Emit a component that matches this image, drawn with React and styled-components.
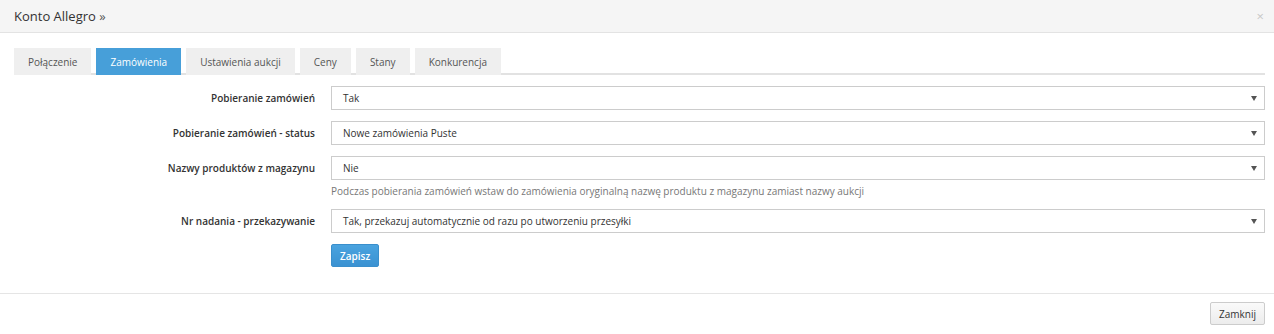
import React from 'react';
import styled, { createGlobalStyle } from 'styled-components';

const GlobalStyle = createGlobalStyle`
  body {
    margin: 0;
    background: #fff;
    font-family: "Open Sans", "Noto Sans", sans-serif;
    color: #333;
  }
`;

const tabs = ['Połączenie', 'Zamówienia', 'Ustawienia aukcji', 'Ceny', 'Stany', 'Konkurencja'];

const fields = [
    { label: 'Pobieranie zamówień', value: 'Tak' },
    { label: 'Pobieranie zamówień - status', value: 'Nowe zamówienia Puste' },
    {
        label: 'Nazwy produktów z magazynu',
        value: 'Nie',
        help: 'Podczas pobierania zamówień wstaw do zamówienia oryginalną nazwę produktu z magazynu zamiast nazwy aukcji',
    },
    { label: 'Nr nadania - przekazywanie', value: 'Tak, przekazuj automatycznie od razu po utworzeniu przesyłki' },
];

const App = () => {
    return (
        <Modal>
            <GlobalStyle />
            <Header>
                <Title>Konto Allegro <span>»</span></Title>
                <Close>×</Close>
            </Header>
            <Body>
                <TabBar>
                    {tabs.map((t, i) => (
                        <Tab key={t} active={i === 1}>{t}</Tab>
                    ))}
                </TabBar>
                <Form>
                    {fields.map((f) => (
                        <Row key={f.label}>
                            <Label>{f.label}</Label>
                            <Field>
                                <Select>
                                    <span>{f.value}</span>
                                    <Caret viewBox="0 0 6 5">
                                        <path d="M0 0 H6 L3 5 Z" fill="#555" />
                                    </Caret>
                                </Select>
                                {f.help && <Help>{f.help}</Help>}
                            </Field>
                        </Row>
                    ))}
                    <Row>
                        <Label />
                        <Field>
                            <PrimaryButton>Zapisz</PrimaryButton>
                        </Field>
                    </Row>
                </Form>
            </Body>
            <Footer>
                <DefaultButton>Zamknij</DefaultButton>
            </Footer>
        </Modal>
    );
};

const Modal = styled.div`
  width: 1274px;
`;

const Header = styled.div`
  height: 32px;
  background: #f5f5f5;
  border-bottom: 1px solid #e3e3e3;
  display: flex;
  align-items: center;
  justify-content: space-between;
  padding: 0 10px 0 14px;
`;

const Title = styled.div`
  font-size: 13px;
  color: #333;

  span {
    color: #555;
  }
`;

const Close = styled.div`
  font-size: 13px;
  color: #c8c8c8;
  line-height: 1;
`;

const Body = styled.div`
  padding: 15px 9px 25px 14px;
  border-bottom: 1px solid #e5e5e5;
`;

const TabBar = styled.div`
  display: flex;
  gap: 5px;
  border-bottom: 2px solid #e2e2e2;
  height: 25px;
`;

const Tab = styled.div`
  height: 27px;
  padding: 0 14px;
  display: flex;
  align-items: center;
  font-size: 10px;
  background: ${(p) => (p.active ? '#479fd9' : '#efefef')};
  color: ${(p) => (p.active ? '#fff' : '#555')};
`;

const Form = styled.div`
  margin-top: 11px;
  display: flex;
  flex-direction: column;
  gap: 11px;
`;

const Row = styled.div`
  display: grid;
  grid-template-columns: 301px 1fr;
  column-gap: 16px;
  align-items: start;
`;

const Label = styled.div`
  height: 24px;
  display: flex;
  align-items: center;
  justify-content: flex-end;
  font-size: 10px;
  font-weight: 600;
  color: #333;
`;

const Field = styled.div`
  display: flex;
  flex-direction: column;
  align-items: flex-start;
`;

const Select = styled.div`
  box-sizing: border-box;
  width: 100%;
  height: 24px;
  border: 1px solid #ccc;
  padding: 0 7px 0 11px;
  display: flex;
  align-items: center;
  justify-content: space-between;
  font-size: 10px;
  color: #333;
`;

const Caret = styled.svg`
  width: 6px;
  height: 5px;
`;

const Help = styled.div`
  margin-top: 4px;
  font-size: 10px;
  line-height: 14px;
  color: #777;
`;

const PrimaryButton = styled.button`
  height: 23px;
  padding: 0 8px;
  border: 1px solid #3a8fcc;
  border-radius: 2px;
  background: linear-gradient(#4aa3df, #3a92d2);
  color: #fff;
  font-family: inherit;
  font-size: 10px;
  font-weight: 600;
`;

const Footer = styled.div`
  display: flex;
  justify-content: flex-end;
  padding: 8px 9px 8px 14px;
`;

const DefaultButton = styled.button`
  height: 23px;
  padding: 0 8px;
  border: 1px solid #ccc;
  border-radius: 2px;
  background: linear-gradient(#fafafa, #ececec);
  color: #333;
  font-family: inherit;
  font-size: 10px;
`;

export default App;
